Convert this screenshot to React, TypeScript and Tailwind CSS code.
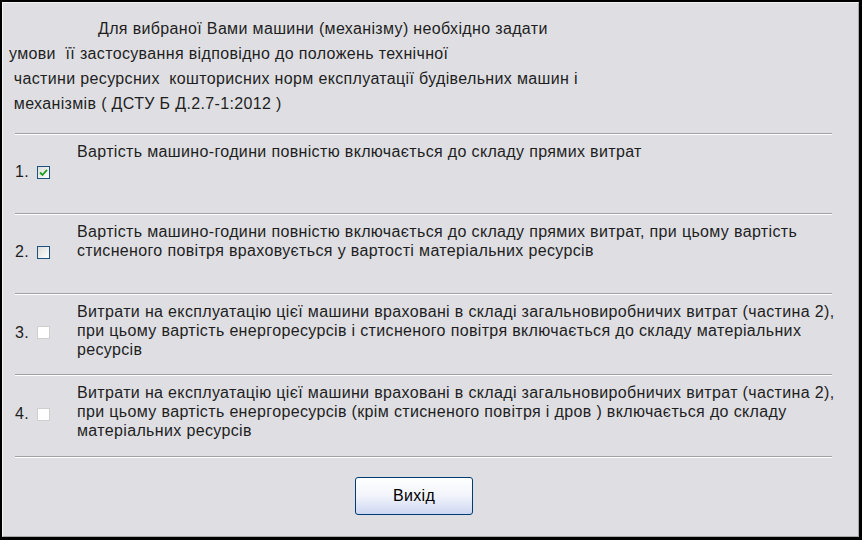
import React from 'react'

const items = [
  {
    n: '1.',
    state: 'checked',
    h: 'h-[78px]',
    lines: ['Вартість машино-години повністю включається до складу прямих витрат'],
  },
  {
    n: '2.',
    state: 'empty',
    h: 'h-[78px]',
    lines: [
      'Вартість машино-години повністю включається до складу прямих витрат, при цьому вартість',
      'стисненого повітря враховується у вартості матеріальних ресурсів',
    ],
  },
  {
    n: '3.',
    state: 'disabled',
    h: 'h-[79px]',
    lines: [
      'Витрати на експлуатацію цієї машини враховані в складі загальновиробничих витрат (частина 2),',
      'при цьому вартість енергоресурсів і стисненого повітря включається до складу матеріальних',
      'ресурсів',
    ],
  },
  {
    n: '4.',
    state: 'disabled',
    h: 'h-[80px]',
    lines: [
      'Витрати на експлуатацію цієї машини враховані в складі загальновиробничих витрат (частина 2),',
      'при цьому вартість енергоресурсів (крім стисненого повітря і дров ) включається до складу',
      'матеріальних ресурсів',
    ],
  },
]

function Rule() {
  return (
    <div className="w-[817px]">
      <div className="h-px bg-[#a0a0a6]" />
      <div className="h-px bg-white" />
    </div>
  )
}

function Box({ state }: { state: string }) {
  if (state === 'disabled') {
    return <span className="block w-[13px] h-[13px] border border-[#cfcfcf] bg-white" />
  }
  return (
    <span className="flex items-center justify-center w-[13px] h-[13px] border border-[#1c5180] bg-gradient-to-br from-[#dcdcd7] to-white">
      {state === 'checked' && (
        <svg width="9" height="9" viewBox="0 0 9 9">
          <path d="M1 4.5 L3.5 7 L8 1.8" fill="none" stroke="#21a121" strokeWidth="1.8" />
        </svg>
      )}
    </span>
  )
}

export default function App() {
  return (
    <div
      className="w-[862px] h-[540px] bg-black pt-[2px] pl-[2px] pr-[3px] pb-[3px] text-[#1e1e1e] tracking-[0.35px]"
      style={{ fontFamily: '"Liberation Sans", Arial, sans-serif' }}
    >
      <div className="h-full border-t border-l border-[#f4f4f4] border-r border-b border-r-[#a8a8a8] border-b-[#a8a8a8] bg-[#dfdfe3]">
        <div className="pt-[13px] pl-[6px] text-[16px] leading-[25px]">
          <div className="whitespace-pre pl-[89px]">Для вибраної Вами машини (механізму) необхідно задати</div>
          <div className="whitespace-pre">умови  її застосування відповідно до положень технічної</div>
          <div className="whitespace-pre"> частини ресурсних  кошторисних норм експлуатації будівельних машин і</div>
          <div className="whitespace-pre"> механізмів ( ДСТУ Б Д.2.7-1:2012 )</div>
        </div>

        <div className="pl-[12px] mt-[17px]">
          <Rule />
          {items.map((it) => (
            <div key={it.n}>
              <div className={`flex ${it.h}`}>
                <div className="flex items-center gap-[8px] w-[62px] pb-[4px]">
                  <span className="text-[16px]">{it.n}</span>
                  <Box state={it.state} />
                </div>
                <div className="pt-[7px] text-[16px] leading-[19px]">
                  {it.lines.map((l, i) => (
                    <div key={i} className="whitespace-pre">{l}</div>
                  ))}
                </div>
              </div>
              <Rule />
            </div>
          ))}
          <div className="pt-[19px] pl-[340px]">
            <button className="w-[118px] h-[38px] rounded-[3px] border border-[#003c74] bg-gradient-to-b from-white via-[#f2f4fb] to-[#cdd7f2] text-[16px] text-black">
              Вихід
            </button>
          </div>
        </div>
      </div>
    </div>
  )
}
